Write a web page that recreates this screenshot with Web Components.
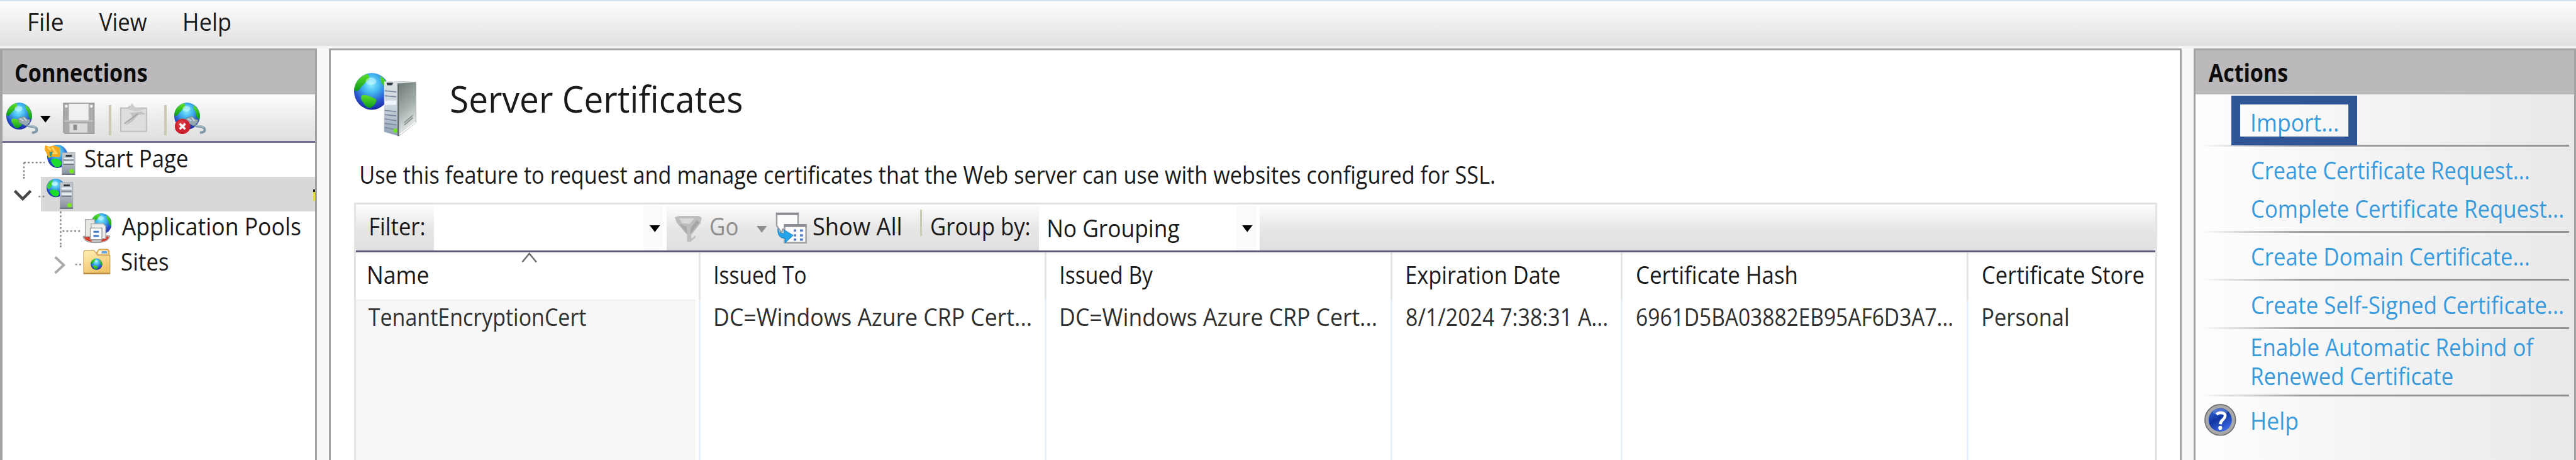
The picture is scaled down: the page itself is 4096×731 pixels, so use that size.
<!DOCTYPE html>
<html lang="en">
<head>
<meta charset="utf-8">
<title>Internet Information Services Manager</title>
<style>
html,body{margin:0;padding:0;overflow:hidden;background:#f6f6f6}
body{font-family:"Open Sans","Noto Sans",sans-serif;color:#1a1a1a}
/* --b3 and --b4 land on whole device pixels at this zoom */
iis-app{zoom:.97338;--b3:3.09px;--b4:4.12px}
</style>
</head>
<body>
<iis-app></iis-app>
<script>
const define=(name,html,after)=>customElements.define(name,class extends HTMLElement{
  connectedCallback(){
    if(this.shadowRoot)return;
    const root=this.attachShadow({mode:'open'});
    const t=document.createElement('template');
    t.innerHTML=typeof html==='function'?html(this):html;
    root.append(t.content.cloneNode(true));
    if(after)after(this,root);
  }
});

/* Text label whose inked width is given by the w attribute, in px. */
const ctx=document.createElement('canvas').getContext('2d');
define('ui-text',el=>{
  const w=+el.getAttribute('w'),size=+(el.getAttribute('size')||40),weight=el.getAttribute('weight')||400;
  ctx.font=`${weight} ${size}px "Open Sans","Noto Sans",sans-serif`;
  const m=ctx.measureText(el.textContent);
  const s=w/(m.actualBoundingBoxRight+m.actualBoundingBoxLeft);
  const dx=m.actualBoundingBoxLeft*s+.8;
  const lh=size===40?54:80;
  return `<style>:host{display:block;flex:none;width:${w}px;height:${lh}px;line-height:${lh}px;font-size:${size}px;font-weight:${weight};white-space:nowrap}
  span{display:inline-block;white-space:nowrap;transform-origin:0 0;transform:translate(${dx}px,1px) scaleX(${s})}</style><span><slot></slot></span>`;
});

const globeDefs=`<defs>
<radialGradient id="sea" cx=".48" cy=".3" r=".72"><stop offset="0" stop-color="#8df0ff"/><stop offset=".35" stop-color="#41b4ee"/><stop offset=".7" stop-color="#2a55cf"/><stop offset="1" stop-color="#16249a"/></radialGradient>
<linearGradient id="land" x1="0" y1="0" x2="0" y2="1"><stop offset="0" stop-color="#5fe02a"/><stop offset="1" stop-color="#0b9a1c"/></linearGradient>
<linearGradient id="steel" x1="0" y1="0" x2="0" y2="1"><stop offset="0" stop-color="#c2c8cd"/><stop offset=".5" stop-color="#b3bac2"/><stop offset="1" stop-color="#838e9c"/></linearGradient>
<linearGradient id="side" x1="0" y1="0" x2=".3" y2="1"><stop offset="0" stop-color="#6c7876"/><stop offset=".55" stop-color="#a2adab"/><stop offset="1" stop-color="#e9eeee"/></linearGradient>
<linearGradient id="front" x1="0" y1="0" x2="0" y2="1"><stop offset="0" stop-color="#dfe5e8"/><stop offset=".5" stop-color="#c9d3db"/><stop offset="1" stop-color="#8f9fb5"/></linearGradient>
<linearGradient id="gold" x1="0" y1="0" x2=".5" y2="1"><stop offset="0" stop-color="#fff0b4"/><stop offset="1" stop-color="#f0c368"/></linearGradient>
</defs>`;
/* Unit globe of radius 20 centred on the origin. */
const globe=(x,y,sx,sy=sx)=>`<g transform="translate(${x} ${y}) scale(${sx/20} ${sy/20})"><circle r="20" fill="url(#sea)"/>
<path d="M-5-19C-13-17-19-10-20-2C-17 2-14-2-12-5C-9-7-8-10-4-12C-2-15-3-17-5-19Z" fill="url(#land)"/>
<path d="M-12 5C-8 2-1 6 4 8C7 10 3 16-2 18C-8 18-9 12-12 9Z" fill="url(#land)"/>
<path d="M9-17C15-14 20-7 20-1C20 5 18 6 16 3C13-1 15-5 12-8C9-11 11-14 9-17Z" fill="url(#land)"/>
<ellipse cx="-1" cy="-11" rx="6" ry="4" fill="#d9ffff" opacity=".5"/></g>`;
/* Globe of the small tree icons: a bright sea with one southern continent. */
const treeGlobe=(x,y,sx,sy=sx)=>`<g transform="translate(${x} ${y}) scale(${sx/20} ${sy/20})"><circle r="20" fill="url(#sea)"/>
<path d="M-6-18C-14-15-19-8-19-1C-16 6-12 2-10-3C-6-6-9-12-6-18Z" fill="#3ccf3a"/><path d="M-13 7C-8 2 2 3 7 9C9 13 6 18 1 19C-6 19-11 13-13 7Z" fill="#1ddb2c"/><ellipse cx="-2" cy="-9" rx="7" ry="5" fill="#d9ffff" opacity=".6"/></g>`;
const plug=`<g transform="translate(17 22)"><path d="M2 4L8 2L12 0L17 5L22 6L21 11L15 16L9 13L4 11Z" fill="#94a9b1" stroke="#6b838f" stroke-width="1"/><path d="M5 4L11 8M12 3L16 8" stroke="#cfdde2" stroke-width="1.600"/><path d="M17 15C22 19 28 15 32 20C35 25 30 27 25 27" fill="none" stroke="#7e9aa8" stroke-width="4"/><path d="M19 15C24 17 28 15 31 19" fill="none" stroke="#b6cad2" stroke-width="1.500"/></g>`;
const tower=(x,y,h)=>`<g transform="translate(${x} ${y})"><rect width="21" height="${h}" fill="url(#steel)" stroke="#9aa2a9" stroke-width=".8"/><rect x="6" y="3.500" width="10" height="3" fill="#2f3438"/><path d="M3 10H19M3 ${h*.44}H19" stroke="#e9eef1" stroke-width="3.500"/><path d="M2 ${h*.33}H19M2 ${h*.53}H19" stroke="#67727c" stroke-width="1.500"/><path d="M0 ${h-.8}H21" stroke="#4c5563" stroke-width="1.400"/><rect x="12" y="${h-9}" width="7" height="6.500" rx="2" fill="#7bea1c"/></g>`;
const icons={
connect:[52,52,globe(21,22,21,22)+plug],
disconnect:[52,52,globe(21,22,21,22)+plug+`<circle cx="13.500" cy="39" r="12.500" fill="#cf2230"/><circle cx="12" cy="36" r="7" fill="#e35058" opacity=".5"/><path d="M9 34.500L18 43.500M18 34.500L9 43.500" stroke="#fff" stroke-width="3.600"/>`],
save:[52,52,`<path d="M1 1H51V51H4L1 48Z" fill="#a9a9a9"/><rect x="10" y="1" width="32" height="28" fill="#f0f0f0" stroke="#d4d4d4"/><path d="M2 30H50" stroke="#c6c6c6" stroke-width="2"/><rect x="11" y="34" width="29" height="15" fill="#dcdcdc" stroke="#c8c8c8"/><rect x="17" y="36" width="6" height="9" fill="#8f8f8f"/><circle cx="5.500" cy="6" r="2.500" fill="#eee"/><circle cx="46.500" cy="6" r="2.500" fill="#eee"/><path d="M1 1H51V51H4L1 48Z" fill="none" stroke="#999" stroke-width="1.500"/>`],
folderup:[46,50,`<path d="M2 9H14L17 6L21 9H44V47H2Z" fill="#dedede" stroke="#bdbdbd" stroke-width="2"/><path d="M14 12L20 1L26 8L42 11L30 14Z" fill="#cdcdcd"/><path d="M9 36C15 34 15 27 22 24L17 17L36 15L43 19L31 20L26 25C22 32 15 34 12 36Z" fill="#c2c2c2"/><path d="M8 34C12 32 16 28 22 24L30 18" stroke="#a6a6a6" stroke-width="2" fill="none"/>`],
start:[50,50,treeGlobe(21,19,17,19)+`<path d="M1 1L8 3L15 1L25 5V20H17L11 19L6 21L3 14L0 8Z" fill="#f7ab1c"/><path d="M12 4L19 14H13M5 4L10 9" stroke="#ffd668" stroke-width="3" fill="none"/><path d="M8 12L13 11L11 19L8 18Z" fill="#279a91"/>`+tower(28.500,13,36)],
server:[44,50,treeGlobe(15,15,15)+tower(22,6,43)],
pools:[48,50,globe(31,17,17)+`<path d="M1 38C2 45 10 48 22 48S44 45 45 37L38 36H6Z" fill="#c4c4c4" stroke="#8d8d8d" stroke-width="1"/><path d="M3 38L11 37L16 46C9 46 3 43 3 38Z M43 38L36 37L30 46C37 46 43 43 43 38Z" fill="#d83c2b"/><path d="M5 10H20V38H5Z" fill="#e9e7e4" stroke="#a5a5a5" stroke-width="1.500"/><path d="M14 17H34L38 21V41H18Z" fill="#efeeec" stroke="#b0b0b0" stroke-width="1.500"/><path d="M13 24H32V43H13Z" fill="#fff" stroke="#999" stroke-width="1.500"/><path d="M18 30H27M18 37H27" stroke="#3e78c4" stroke-width="3"/>`],
sites:[46,42,`<path d="M22 6L26 1H41L43 4V12H22Z" fill="#e9b960" stroke="#c59a4c"/><path d="M26 3H40V9H24Z" fill="#fff7df"/><path d="M31 4H39V8H30Z" fill="#65a7d8"/><path d="M1 7Q1 3 5 3H18L24 11H44V41H1Z" fill="url(#gold)" stroke="#c9a05a" stroke-width="1.200"/><path d="M1 40.500H44" stroke="#b3873f" stroke-width="2"/>`+globe(22,25.500,9.500)],
certserver:[104,104,`<g>${globe(29,30,29,30)}</g>`+`<path d="M49 14L72 13L73 103L49 96Z" fill="url(#front)"/><path d="M72 14L101 15V81L73 103Z" fill="url(#side)" stroke="#9aa3a3" stroke-width="1"/><path d="M49 14L58 13L101 15L73 17Z" fill="#dde3e4"/><path d="M53 16L64 16L62 20H54Z" fill="#2f3b46"/><path d="M50 29L69 31M50 37L69 39M50 61L69 63M50 68L69 70M50 75L69 78M50 82L69 85M50 89L66 92" stroke="#7a8aa0" stroke-width="1.800"/><path d="M50 45H69V52H50Z" fill="#eef6f9"/><path d="M72 17V103" stroke="#565f5d" stroke-width="1.800"/><circle cx="67.500" cy="94" r="3.500" fill="#73e024"/><path d="M82 81L96 69M82 85L96 73" stroke="#8b9594" stroke-width="2"/><path d="M75 100L101 80" stroke="#fff" stroke-width="1.500"/>`],
funnel:[46,44,`<path d="M1 2L10 0H40L45 3L43 12L28 31V37L35 32V35L27 42H21V31L4 11Z" fill="#bdbdbd"/><path d="M8 4H33L25 13L13 12Z" fill="#d8d8d8"/><path d="M37 7L28 18L26 30L41 11Z" fill="#a4a4a4"/><path d="M8 13L21 29L20 17Z" fill="#a9a9a9"/>`],
showall:[52,52,`<path d="M2 2H37V28H12L10 34L2 22Z" fill="#fcfcfc" stroke="#9c9fa3" stroke-width="2.500"/><path d="M1 3H38" stroke="#8b8e92" stroke-width="4"/><path d="M15 22H50V50H15Z" fill="#fdfdfd" stroke="#9c9fa3" stroke-width="2.500"/><path d="M14 22H51" stroke="#8b8e92" stroke-width="5"/><path d="M30 30H34M30 38H34M30 45H34M40 30H45M40 38H45M40 45H45" stroke="#557bc5" stroke-width="3.500"/><path d="M4 27C5 33 8 35 14 35V29L29 38L16 50V43C7 43 3 37 4 27Z" fill="#26a2e8" stroke="#1b7fc2"/>`],
help:[52,52,`<defs><linearGradient id="hb" x1="0" y1="0" x2=".6" y2="1"><stop offset="0" stop-color="#3b6ee0"/><stop offset=".5" stop-color="#1136a0"/><stop offset="1" stop-color="#3c68e4"/></linearGradient></defs><circle cx="26" cy="26" r="25" fill="#a9a9a9" stroke="#717171" stroke-width="1.800"/><circle cx="26" cy="26" r="19" fill="url(#hb)"/><ellipse cx="26" cy="13" rx="12" ry="5" fill="#8aacf1" opacity=".4"/><path d="M20 17C25 12 35 14 34 20C33 26 27 25 26 33" fill="none" stroke="#fff" stroke-width="4.800"/><circle cx="26" cy="39" r="3.200" fill="#fff"/>`],
down:[18,11,`<path d="M0 0H17L8.500 11Z" fill="currentColor"/>`],
sort:[26,17,`<path d="M1.500 16L13 2L24.500 16" fill="none" stroke="#6d6d6d" stroke-width="2.600"/>`]
};
define('ui-icon',el=>{
  const [w,h,body]=icons[el.getAttribute('name')];
  return `<style>:host{display:block;flex:none;width:${w}px;height:${h}px}svg{display:block;width:100%;height:100%}</style><svg viewBox="0 0 ${w} ${h}">${globeDefs}${body}</svg>`;
});

define('menu-bar',`<style>:host{display:flex;box-sizing:border-box;height:78px;padding:5.500px 0 0 46px;border-top:2.06px solid #d6e2ee;background:linear-gradient(#fdfdfd,#e2e1e2 72px,#f4f4f4 74px)}
.v{margin-left:59px}.h{margin-left:61px}</style>
<ui-text w="56">File</ui-text><ui-text class="v" w="78">View</ui-text><ui-text class="h" w="76">Help</ui-text>`);

define('panel-title',`<style>:host{display:flex;height:72px;padding-left:var(--pad,21px);background:#bbb9bc;color:#0c0c0c}::slotted(*){margin-top:8.500px}</style><slot></slot>`);

define('connection-tools',`<style>:host{display:flex;box-sizing:border-box;height:79px;padding:13px 0 0 6px;border-bottom:var(--b3) solid #706c94;background:linear-gradient(#fefefe,#ececec 50%,#e0dfe0)}
i{flex:none;width:4px;height:49px;margin-top:5px;background:#cbc9b2}</style>
<ui-icon name="connect"></ui-icon><ui-icon name="down" style="margin:22px 0 0 4px;color:#000"></ui-icon><ui-icon name="save" style="margin-left:19px"></ui-icon>
<i style="margin-left:23px"></i><ui-icon name="folderup" style="margin-left:13px"></ui-icon><i style="margin-left:27px"></i><ui-icon name="disconnect" style="margin-left:13px"></ui-icon>`);

define('tree-row',`<style>:host{display:flex;align-items:center;height:56px}svg{display:block}::slotted(ui-text){margin-top:-7px}</style><slot name="lines"></slot><slot></slot>`);

define('connections-tree',`<style>:host{display:block;flex:1;background:#fff}
.sel{background:linear-gradient(90deg,#fff 63px,#d8d8d8 63px)}
.mark{align-self:flex-start;width:3px;height:19px;margin:20px 0 0 auto;background:linear-gradient(#222 4px,#eadb48 4px)}
.dots{stroke:#8b8b8b;stroke-width:2.600;stroke-dasharray:3 3.400;fill:none}</style>
<tree-row><svg slot="lines" width="69" height="56"><path class="dots" d="M35 32H69M35 32V61"/></svg><ui-icon name="start"></ui-icon><ui-text w="167" style="margin-left:16px">Start Page</ui-text></tree-row>
<tree-row class="sel"><svg slot="lines" width="72" height="56"><path class="dots" d="M35 0V6M59 32H69"/><path d="M20 23L33 36L46 23" fill="none" stroke="#484848" stroke-width="4.500"/></svg><ui-icon name="server"></ui-icon><span class="mark"></span></tree-row>
<tree-row><svg slot="lines" width="130" height="56"><path class="dots" d="M95 0V56M98 32H129"/></svg><ui-icon name="pools"></ui-icon><ui-text w="292" style="margin:-9px 0 0 16px">Application Pools</ui-text></tree-row>
<tree-row><svg slot="lines" width="131" height="56"><path class="dots" d="M95 0V5M119 31H129"/><path d="M86 19L100 32L86 45" fill="none" stroke="#a9a9a9" stroke-width="4"/></svg><ui-icon name="sites" style="margin-top:-5px"></ui-icon><ui-text w="76" style="margin-left:17px">Sites</ui-text></tree-row>`);

define('connections-panel',`<style>:host{display:flex;flex-direction:column;box-sizing:border-box;width:518px;border:solid #a3a3a3;border-width:var(--b3) var(--b3) 0 var(--b4)}</style>
<panel-title><ui-text weight="700" w="215">Connections</ui-text></panel-title><connection-tools></connection-tools><connections-tree></connections-tree>`);

define('filter-bar',`<style>:host{display:flex;height:75px;background:linear-gradient(#fdfdfd,#e7e6e7 55%,#e0dfe0)}
:host>*{margin-top:7.500px}.box{display:flex;margin-top:1px;background:linear-gradient(90deg,#fff calc(100% - 38px),#fbfbfb 0,#fbfbfb calc(100% - 5px),#fff 0)}
i{flex:none;width:3px;height:44px;margin:19px 0 0 33px;background:#cbc9b2}.g{color:#8e8e8e}</style>
<ui-text w="88" style="margin:7px 0 0 23px">Filter:</ui-text>
<div class="box" style="width:380px;margin:1px 0 0 17px"><ui-icon name="down" style="margin:33px 0 0 352px;color:#000"></ui-icon></div>
<ui-icon name="funnel" style="margin:18px 0 0 12px"></ui-icon><ui-text class="g" w="44" style="margin:7px 0 0 13px">Go</ui-text>
<ui-icon class="g" name="down" style="margin:35px 0 0 32px"></ui-icon>
<ui-icon name="showall" style="margin:12px 0 0 13px"></ui-icon><ui-text w="142" style="margin:7px 0 0 9px">Show All</ui-text>
<i></i><ui-text w="160" style="margin:7px 0 0 14px">Group by:</ui-text>
<div class="box" style="width:361px;margin:1px 0 0 17px"><ui-text w="214" style="margin:9.500px 0 0 15px">No Grouping</ui-text><ui-icon name="down" style="margin:33px 0 0 103px;color:#000"></ui-icon></div>`);

const cols=[[563,'Name',98,'TenantEncryptionCert',356],[565,'Issued To',148,'DC=Windows Azure CRP Cert...',516],[565,'Issued By',151,'DC=Windows Azure CRP Cert...',515],[376,'Expiration Date',250,'8/1/2024 7:38:31 A...',327],[565,'Certificate Hash',261,'6961D5BA03882EB95AF6D3A7...',515],[306,'Certificate Store',263,'Personal',139]];
define('cert-grid',`<style>:host{display:grid;flex:1;grid-template-columns:${cols.map(c=>c[0]+'px').join(' ')};grid-template-rows:77px 1fr;background:#fff}
div{box-sizing:border-box;padding:8px 0 0 20px;border-right:var(--b3) solid #e6e6e6}
.b{padding-top:0;border-color:#e6f0fa}.first{padding-left:20px;background:#fff}.b.first{background:#f6f6f6;box-shadow:inset -5px 0 #fff,inset 0 2px #f1f1f1}.last{border:0}
.name{display:flex}.name ui-icon{margin:-8px 0 0 153px}</style>`+
cols.map((c,i)=>`<div class="${i==0?'first name':i==5?'last':''}"><ui-text w="${c[2]}" style="${i?'margin-left:3px':''}">${c[1]}</ui-text>${i==0?'<ui-icon name="sort"></ui-icon>':''}</div>`).join('')+
cols.map((c,i)=>`<div class="b ${i==0?'first':i==5?'last':''}"><ui-text w="${c[4]}" style="${i?'margin-left:3px;':''}color:#303030">${c[3]}</ui-text></div>`).join(''));

define('certificates-view',`<style>:host{display:flex;flex-direction:column;box-sizing:border-box;width:3027px;margin-left:19px;padding-left:38px;border:solid #a3a3a3;border-width:var(--b3) var(--b3) 0;background:#fff}
header{display:flex;height:174.500px;padding-top:0}header ui-icon{margin-top:37px}header ui-text{margin:38.400px 0 0 55px}
section{display:flex;flex-direction:column;flex:1;box-sizing:border-box;width:2946px;margin-top:20.500px;border:var(--b3) solid #e3e3e3;border-bottom:0}hr{flex:none;width:100%;height:3px;margin:0;border:0;background:#5b5a7d}</style>
<header><ui-icon name="certserver"></ui-icon><ui-text size="60" w="474">Server Certificates</ui-text></header>
<ui-text w="1852" style="margin-left:11px">Use this feature to request and manage certificates that the Web server can use with websites configured for SSL.</ui-text>
<section><filter-bar></filter-bar><hr><cert-grid></cert-grid></section>`);

define('action-link',`<style>:host{display:flex;height:54px;padding-left:92px;color:#399bdc}</style><slot></slot>`);
define('actions-panel',`<style>:host{display:flex;flex-direction:column;box-sizing:border-box;position:relative;width:625px;margin-left:19px;border:solid #a3a3a3;border-width:var(--b3) var(--b3) 0;background:linear-gradient(90deg,#fefefe,#f4f3f4 50%,#e9e9e9)}
hr{flex:none;width:602px;height:3px;margin:0 0 0 9px;border:0;background:linear-gradient(90deg,transparent,#a0a0a0 28%,#939393)}
.callout{position:absolute;box-sizing:border-box;left:58.500px;top:74px;width:206px;height:81px;border:14.400px solid #2f5597}
.help{padding-left:15px}.help ui-icon{margin-top:1.500px}.help ui-text{margin-left:25px}</style>
<panel-title><ui-text weight="700" w="129">Actions</ui-text></panel-title>
<action-link style="margin-top:17.500px"><ui-text w="140">Import...</ui-text></action-link><hr style="margin-top:10.500px">
<action-link style="margin-top:10.500px"><ui-text w="452">Create Certificate Request...</ui-text></action-link>
<action-link style="margin-top:9px"><ui-text w="508">Complete Certificate Request...</ui-text></action-link><hr style="margin-top:10.500px">
<action-link style="margin-top:10.500px"><ui-text w="452">Create Domain Certificate...</ui-text></action-link><hr style="margin-top:11px">
<action-link style="margin-top:11.500px"><ui-text w="508">Create Self-Signed Certificate...</ui-text></action-link><hr style="margin-top:10px">
<action-link style="margin-top:1.500px"><ui-text w="462">Enable Automatic Rebind of</ui-text></action-link>
<action-link style="margin-top:-7px"><ui-text w="328">Renewed Certificate</ui-text></action-link><hr style="margin-top:4.500px">
<action-link class="help" style="margin-top:11.500px"><ui-icon name="help"></ui-icon><ui-text w="75">Help</ui-text></action-link>
<div class="callout"></div>`);

define('iis-app',`<style>:host{display:flex;flex-direction:column;width:4208px;height:751px;overflow:hidden;background:#f6f6f6}main{display:flex;flex:1;min-height:0;padding-top:1px}</style>
<menu-bar></menu-bar><main><connections-panel></connections-panel><certificates-view></certificates-view><actions-panel></actions-panel></main>`);
</script>
</body>
</html>
